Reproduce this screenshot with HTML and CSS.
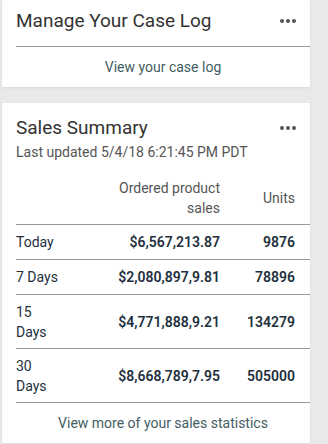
FILE: index.html
```html
<!DOCTYPE html>
<html lang="en">
<head>
    <meta charset="UTF-8">
    <meta name="viewport" content="width=device-width, initial-scale=1.0">
    <title>Seller Dashboard</title>
    <link rel="stylesheet" href="styles.css">
</head>
<body>
    <div class="card card-top">
        <div class="card-head">
            <h2 class="card-title">Manage Your Case Log</h2>
            <span class="dots"><i></i><i></i><i></i></span>
        </div>
        <a class="card-link" href="#">View your case log</a>
    </div>

    <div class="card">
        <div class="card-head">
            <h2 class="card-title">Sales Summary</h2>
            <span class="dots"><i></i><i></i><i></i></span>
        </div>
        <p class="updated">Last updated 5/4/18 6:21:45 PM PDT</p>
        <table class="sales">
            <thead>
                <tr>
                    <th></th>
                    <th class="num">Ordered product<br>sales</th>
                    <th class="num units">Units</th>
                </tr>
            </thead>
            <tbody>
                <tr>
                    <td>Today</td>
                    <td class="num strong">$6,567,213.87</td>
                    <td class="num strong units">9876</td>
                </tr>
                <tr>
                    <td>7 Days</td>
                    <td class="num strong">$2,080,897,9.81</td>
                    <td class="num strong units">78896</td>
                </tr>
                <tr class="tall">
                    <td>15<br>Days</td>
                    <td class="num strong">$4,771,888,9.21</td>
                    <td class="num strong units">134279</td>
                </tr>
                <tr class="tall">
                    <td>30<br>Days</td>
                    <td class="num strong">$8,668,789,7.95</td>
                    <td class="num strong units">505000</td>
                </tr>
            </tbody>
        </table>
        <a class="card-link" href="#">View more of your sales statistics</a>
    </div>
</body>
</html>
```

FILE: styles.css
```css
body {
    margin: 0;
    padding: 0 18px 0 2px;
    background-color: #e9e9e9;
    font-family: Roboto, "Liberation Sans", sans-serif;
    color: #333;
}
.card {
    background: white;
    margin-bottom: 16px;
    box-shadow: 0 1px 2px rgba(0, 0, 0, 0.08);
}
.card-top {
    padding-top: 9px;
}
.card:not(.card-top) {
    padding-top: 13px;
}
.card-head {
    display: flex;
    justify-content: space-between;
    align-items: center;
    padding: 0 14px;
}
.card-title {
    margin: 0;
    font-size: 19px;
    font-weight: normal;
    line-height: 24px;
    color: #333;
}
.dots {
    display: flex;
    gap: 2px;
}
.dots i {
    width: 4px;
    height: 4px;
    border-radius: 50%;
    background: #555;
}
.card-top .card-head {
    padding-bottom: 13px;
    border-bottom: 1px solid #999;
    margin-left: 14px;
    padding-left: 0;
}
.card-link {
    display: block;
    text-align: center;
    font-size: 14px;
    line-height: 20px;
    padding: 10px 0 10px 14px;
    color: #435d62;
    text-decoration: none;
}
.updated {
    margin: 2px 0 0;
    padding-left: 14px;
    font-size: 14px;
    line-height: 20px;
    color: #555;
}
.sales {
    margin: 16px 0 0 14px;
    width: calc(100% - 14px);
    border-collapse: collapse;
    font-size: 14px;
    line-height: 20px;
}
.sales th {
    font-weight: normal;
    color: #555;
    padding: 0 0 6px 0;
    border-bottom: 1px solid #999;
}
.sales td {
    padding: 7px 0;
    border-bottom: 1px solid #999;
    color: #232f3e;
}
.sales tr.tall td {
    padding-bottom: 6px;
}
.sales th:first-child,
.sales td:first-child {
    text-align: left;
}
.num {
    text-align: right;
}
.sales .units {
    width: 75px;
    padding-right: 15px;
}
.strong {
    font-weight: 600;
}
```
